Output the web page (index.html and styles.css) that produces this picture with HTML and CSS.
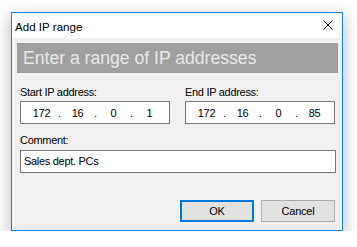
FILE: index.html
```html
<!DOCTYPE html>
<html>
<head>
<meta charset="utf-8">
<link rel="stylesheet" href="styles.css">
</head>
<body>
<div class="dialog">
  <div class="titlebar">
    <span class="title">Add IP range</span>
    <svg class="close" width="10" height="10" viewBox="0 0 10 10"><path d="M0.5 0.5 L9.5 9.5 M9.5 0.5 L0.5 9.5" stroke="#000" stroke-width="1" fill="none"/></svg>
  </div>
  <div class="content">
    <div class="banner">Enter a range of IP addresses</div>
    <div class="fields">
      <div class="row">
        <div class="col">
          <div class="label">Start IP address:</div>
          <div class="ipbox">
            <span class="seg">172</span><span class="dot">.</span><span class="seg">16</span><span class="dot">.</span><span class="seg">0</span><span class="dot">.</span><span class="seg">1</span>
          </div>
        </div>
        <div class="col">
          <div class="label">End IP address:</div>
          <div class="ipbox">
            <span class="seg">172</span><span class="dot">.</span><span class="seg">16</span><span class="dot">.</span><span class="seg">0</span><span class="dot">.</span><span class="seg">85</span>
          </div>
        </div>
      </div>
      <div class="label comment-label">Comment:</div>
      <div class="textbox">Sales dept. PCs</div>
    </div>
    <div class="buttons">
      <div class="btn default">OK</div>
      <div class="btn">Cancel</div>
    </div>
  </div>
</div>
</body>
</html>
```
FILE: styles.css
```css
html, body {
  margin: 0;
  background: #ffffff;
}
body {
  padding: 12px 0 0 11px;
  font-family: "Liberation Sans", Arial, sans-serif;
  font-size: 11px;
  color: #000;
}
.dialog {
  width: 332px;
  box-sizing: border-box;
  border: 1px solid #1c84d8;
  background: #f0f0f0;
  box-shadow: 0 5px 16px rgba(0, 0, 0, 0.3);
}
.titlebar {
  height: 25px;
  background: #ffffff;
  display: flex;
  align-items: center;
  justify-content: space-between;
  padding: 0 9px 0 3px;
}
.title {
  font-size: 11.6px;
  line-height: 25px;
  padding-top: 1px;
}
.close {
  display: block;
  margin-top: -1px;
}
.content {
  padding: 5px 4px 8px 5px;
}
.banner {
  height: 30px;
  background: #a0a0a0;
  color: #e8e8e8;
  font-size: 17.6px;
  line-height: 30px;
  padding-left: 6px;
}
.fields {
  padding: 0 2px 0 3px;
}
.row {
  display: grid;
  grid-template-columns: 150px 150px;
  column-gap: 15px;
  margin-top: 13px;
}
.label {
  line-height: 13px;
  height: 13px;
  letter-spacing: -0.3px;
  margin-bottom: 2px;
}
.ipbox {
  height: 23px;
  box-sizing: border-box;
  border: 1px solid #7a7a7a;
  background: #ffffff;
  display: flex;
  align-items: center;
  padding-left: 6px;
  letter-spacing: -0.3px;
}
.seg {
  width: 29px;
  text-align: center;
}
.dot {
  width: 7px;
  text-align: center;
}
.comment-label {
  margin-top: 10px;
  margin-bottom: 3px;
}
.textbox {
  height: 23px;
  box-sizing: border-box;
  border: 1px solid #7a7a7a;
  background: #ffffff;
  line-height: 21px;
  padding-left: 3px;
  letter-spacing: -0.3px;
}
.buttons {
  display: flex;
  justify-content: flex-end;
  gap: 7px;
  margin-top: 27px;
  padding-right: 3px;
}
.btn {
  width: 74px;
  height: 22px;
  box-sizing: border-box;
  border: 1px solid #adadad;
  background: #e1e1e1;
  text-align: center;
  line-height: 20px;
  letter-spacing: -0.2px;
}
.btn.default {
  border: 2px solid #0078d7;
  line-height: 18px;
}
```
